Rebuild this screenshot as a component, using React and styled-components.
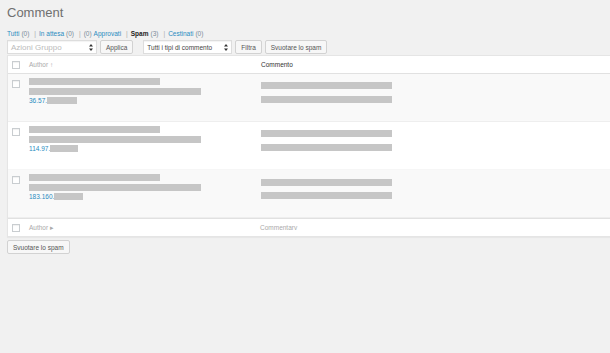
import React from "react";
import styled, { createGlobalStyle } from "styled-components";

const GlobalStyle = createGlobalStyle`
  html, body {
    margin: 0;
    padding: 0;
    background: #f1f1f1;
    overflow: hidden;
  }
  body {
    font-family: "Liberation Sans", Arial, sans-serif;
    color: #444;
  }
`;

const Page = styled.div`
  width: 610px;
  height: 353px;
  padding: 0 0 0 7px;
  box-sizing: border-box;
  overflow: hidden;
`;

const Title = styled.h1`
  margin: 0;
  padding-top: 5px;
  height: 22px;
  font-size: 13px;
  line-height: 16px;
  font-weight: 400;
  color: #6f6f6f;
`;

const Filters = styled.ul`
  list-style: none;
  margin: 0;
  padding: 0;
  display: flex;
  align-items: center;
  height: 12px;
  font-size: 6.5px;
  color: #888;
`;

const FilterItem = styled.li`
  display: flex;
  gap: 2px;
  &:not(:last-child)::after {
    content: "|";
    color: #aaa;
    margin: 0 3px;
  }
`;

const FilterLink = styled.span`
  color: ${(p) => (p.$current ? "#222" : "#2a8bc0")};
  font-weight: ${(p) => (p.$current ? 700 : 400)};
`;

const Count = styled.span`
  color: #7a8c99;
`;

const Toolbar = styled.div`
  display: flex;
  align-items: center;
  height: 14px;
  margin-top: 1px;
`;

const Select = styled.div`
  width: ${(p) => p.$w}px;
  height: 14px;
  box-sizing: border-box;
  background: #fff;
  border: 1px solid #ddd;
  box-shadow: inset 0 1px 1px rgba(0, 0, 0, 0.05);
  display: flex;
  align-items: center;
  justify-content: space-between;
  padding: 0 3px 0 3px;
  font-size: ${(p) => (p.$faded ? 8 : 6.5)}px;
  color: ${(p) => (p.$faded ? "#bbb" : "#444")};
  margin-right: ${(p) => p.$mr || 3}px;
`;

const Button = styled.div`
  height: 14px;
  box-sizing: border-box;
  padding: 0 5px;
  display: flex;
  align-items: center;
  background: #f7f7f7;
  border: 1px solid #d2d2d2;
  border-radius: 2px;
  font-size: 6.5px;
  color: #555;
  margin-right: ${(p) => p.$mr || 3}px;
`;

const Table = styled.div`
  margin-top: 1px;
  width: 620px;
  background: #fff;
  border: 1px solid #e5e5e5;
  box-shadow: 0 1px 1px rgba(0, 0, 0, 0.04);
`;

const HeadRow = styled.div`
  display: grid;
  grid-template-columns: 21px 226px 1fr;
  align-items: center;
  height: 17px;
  background: #fff;
  border-${(p) => (p.$foot ? "top" : "bottom")}: 1px solid #e1e1e1;
  font-size: 6.5px;
`;

const HeadCell = styled.div`
  color: ${(p) => (p.$muted ? "#aaa" : "#333")};
  padding-left: ${(p) => p.$pl || 0}px;
  display: flex;
  align-items: center;
  gap: 2px;
`;

const Row = styled.div`
  display: grid;
  grid-template-columns: 21px 226px 1fr;
  height: 47px;
  background: ${(p) => (p.$alt ? "#f9f9f9" : "#fff")};
  border-bottom: 1px solid ${(p) => (p.$alt ? "#eee" : "#f6f6f6")};
`;

const CheckCell = styled.div`
  padding-top: ${(p) => p.$pt || 0}px;
  padding-left: 4px;
  display: flex;
  align-items: ${(p) => (p.$pt ? "flex-start" : "center")};
`;

const Check = styled.span`
  width: 8px;
  height: 8px;
  box-sizing: border-box;
  border: 1px solid #c9cdd0;
  background: #fff;
  box-shadow: inset 0 1px 1px rgba(0, 0, 0, 0.06);
`;

const AuthorCell = styled.div`
  padding-top: ${(p) => p.$pt}px;
  display: flex;
  flex-direction: column;
  gap: 3px;
`;

const CommentCell = styled.div`
  padding-top: ${(p) => p.$pt}px;
  padding-left: 6px;
  display: flex;
  flex-direction: column;
  gap: ${(p) => p.$gap}px;
`;

const Bar = styled.span`
  display: block;
  width: ${(p) => p.$w}px;
  height: 7px;
  background: #c6c6c6;
`;

const IpLine = styled.div`
  display: flex;
  align-items: center;
  height: 7px;
  font-size: 6.5px;
  color: #2a8bc0;
  margin-top: -1px;
`;

const Footer = styled.div`
  margin-top: 3px;
  display: flex;
`;

function Arrows() {
  return (
    <svg width="4" height="7" viewBox="0 0 4 7">
      <path d="M2 0 L4 2.6 L0 2.6 Z M2 7 L4 4.4 L0 4.4 Z" fill="#333" />
    </svg>
  );
}

const rows = [
  { ip: "36.57.", ipBar: 30, a: 4, c: 8, gap: 7, alt: true },
  { ip: "114.97.", ipBar: 28, a: 4, c: 8, gap: 7, alt: false },
  { ip: "183.160.", ipBar: 29, a: 4, c: 9, gap: 6, alt: true },
];

export default function App() {
  return (
    <>
      <GlobalStyle />
      <Page>
        <Title>Comment</Title>
        <Filters>
          <FilterItem>
            <FilterLink>Tutti</FilterLink>
            <Count>(0)</Count>
          </FilterItem>
          <FilterItem>
            <FilterLink>In attesa</FilterLink>
            <Count>(0)</Count>
          </FilterItem>
          <FilterItem>
            <Count>(0)</Count>
            <FilterLink>Approvati</FilterLink>
          </FilterItem>
          <FilterItem>
            <FilterLink $current>Spam</FilterLink>
            <Count>(3)</Count>
          </FilterItem>
          <FilterItem>
            <FilterLink>Cestinati</FilterLink>
            <Count>(0)</Count>
          </FilterItem>
        </Filters>
        <Toolbar>
          <Select $w={90} $faded>
            Azioni Gruppo
            <Arrows />
          </Select>
          <Button $mr={10}>Applica</Button>
          <Select $w={89}>
            Tutti i tipi di commento
            <Arrows />
          </Select>
          <Button>Filtra</Button>
          <Button>Svuotare lo spam</Button>
        </Toolbar>
        <Table>
          <HeadRow>
            <CheckCell>
              <Check />
            </CheckCell>
            <HeadCell $muted>Author ↑</HeadCell>
            <HeadCell $pl={6}>Commento</HeadCell>
          </HeadRow>
          {rows.map((r) => (
            <Row key={r.ip} $alt={r.alt}>
              <CheckCell $pt={6}>
                <Check />
              </CheckCell>
              <AuthorCell $pt={r.a}>
                <Bar $w={131} />
                <Bar $w={172} />
                <IpLine>
                  {r.ip}
                  <Bar $w={r.ipBar} />
                </IpLine>
              </AuthorCell>
              <CommentCell $pt={r.c} $gap={r.gap}>
                <Bar $w={131} />
                <Bar $w={131} />
              </CommentCell>
            </Row>
          ))}
          <HeadRow $foot>
            <CheckCell>
              <Check />
            </CheckCell>
            <HeadCell $muted>Author ▸</HeadCell>
            <HeadCell $muted $pl={5}>Commentarv</HeadCell>
          </HeadRow>
        </Table>
        <Footer>
          <Button>Svuotare lo spam</Button>
        </Footer>
      </Page>
    </>
  );
}
